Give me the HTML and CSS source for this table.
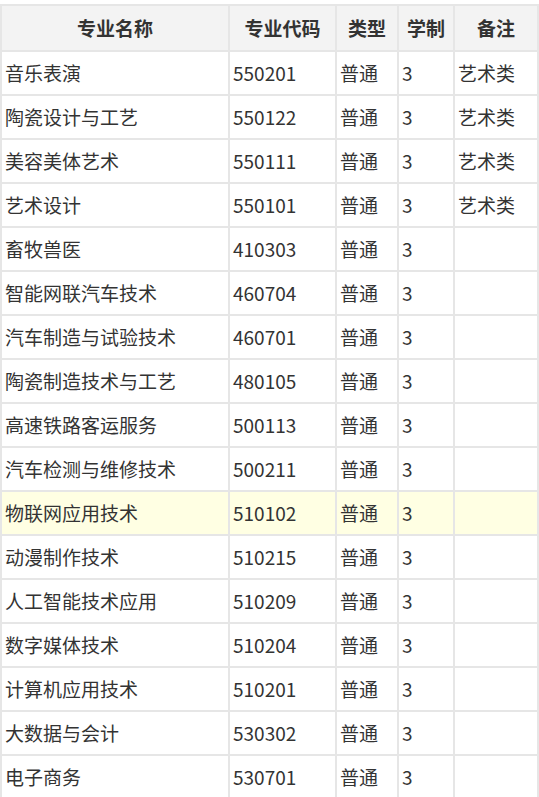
FILE: index.html
```html
<!DOCTYPE html>
<html lang="zh-CN">
<head>
<meta charset="utf-8">
<title>专业列表</title>
<link rel="stylesheet" href="styles.css">
</head>
<body>
<table class="major-table">
  <colgroup>
    <col class="c1"><col class="c2"><col class="c3"><col class="c4"><col class="c5">
  </colgroup>
  <thead>
    <tr><th>专业名称</th><th>专业代码</th><th>类型</th><th>学制</th><th>备注</th></tr>
  </thead>
  <tbody>
    <tr><td>音乐表演</td><td>550201</td><td>普通</td><td>3</td><td>艺术类</td></tr>
    <tr><td>陶瓷设计与工艺</td><td>550122</td><td>普通</td><td>3</td><td>艺术类</td></tr>
    <tr><td>美容美体艺术</td><td>550111</td><td>普通</td><td>3</td><td>艺术类</td></tr>
    <tr><td>艺术设计</td><td>550101</td><td>普通</td><td>3</td><td>艺术类</td></tr>
    <tr><td>畜牧兽医</td><td>410303</td><td>普通</td><td>3</td><td></td></tr>
    <tr><td>智能网联汽车技术</td><td>460704</td><td>普通</td><td>3</td><td></td></tr>
    <tr><td>汽车制造与试验技术</td><td>460701</td><td>普通</td><td>3</td><td></td></tr>
    <tr><td>陶瓷制造技术与工艺</td><td>480105</td><td>普通</td><td>3</td><td></td></tr>
    <tr><td>高速铁路客运服务</td><td>500113</td><td>普通</td><td>3</td><td></td></tr>
    <tr><td>汽车检测与维修技术</td><td>500211</td><td>普通</td><td>3</td><td></td></tr>
    <tr class="hl"><td>物联网应用技术</td><td>510102</td><td>普通</td><td>3</td><td></td></tr>
    <tr><td>动漫制作技术</td><td>510215</td><td>普通</td><td>3</td><td></td></tr>
    <tr><td>人工智能技术应用</td><td>510209</td><td>普通</td><td>3</td><td></td></tr>
    <tr><td>数字媒体技术</td><td>510204</td><td>普通</td><td>3</td><td></td></tr>
    <tr><td>计算机应用技术</td><td>510201</td><td>普通</td><td>3</td><td></td></tr>
    <tr><td>大数据与会计</td><td>530302</td><td>普通</td><td>3</td><td></td></tr>
    <tr><td>电子商务</td><td>530701</td><td>普通</td><td>3</td><td></td></tr>
  </tbody>
</table>
</body>
</html>
```
FILE: styles.css
```css
html, body {
  margin: 0;
  padding: 0;
  background: #fff;
}
body {
  padding-top: 4px;
  font-family: "Noto Sans CJK SC", "Noto Sans", sans-serif;
  color: #333;
}
.major-table {
  width: 539px;
  table-layout: fixed;
  border-collapse: separate;
  border-spacing: 0;
  border-top: 2px solid #e6e6e6;
  border-left: 2px solid #e6e6e6;
}
.c1 { width: 228px; }
.c2 { width: 107px; }
.c3 { width: 62px; }
.c4 { width: 56px; }
.c5 { width: 84px; }
.major-table th,
.major-table td {
  box-sizing: border-box;
  border-right: 2px solid #e6e6e6;
  border-bottom: 2px solid #e6e6e6;
  font-size: 19px;
  line-height: 26px;
  padding: 0 3px;
  white-space: nowrap;
  overflow: hidden;
}
.major-table th {
  height: 46px;
  background: #f3f3f3;
  font-weight: bold;
  text-align: center;
  color: #333;
}
.major-table td {
  height: 44px;
  text-align: left;
}
.major-table tr.hl td {
  background: #ffffe3;
}
```
